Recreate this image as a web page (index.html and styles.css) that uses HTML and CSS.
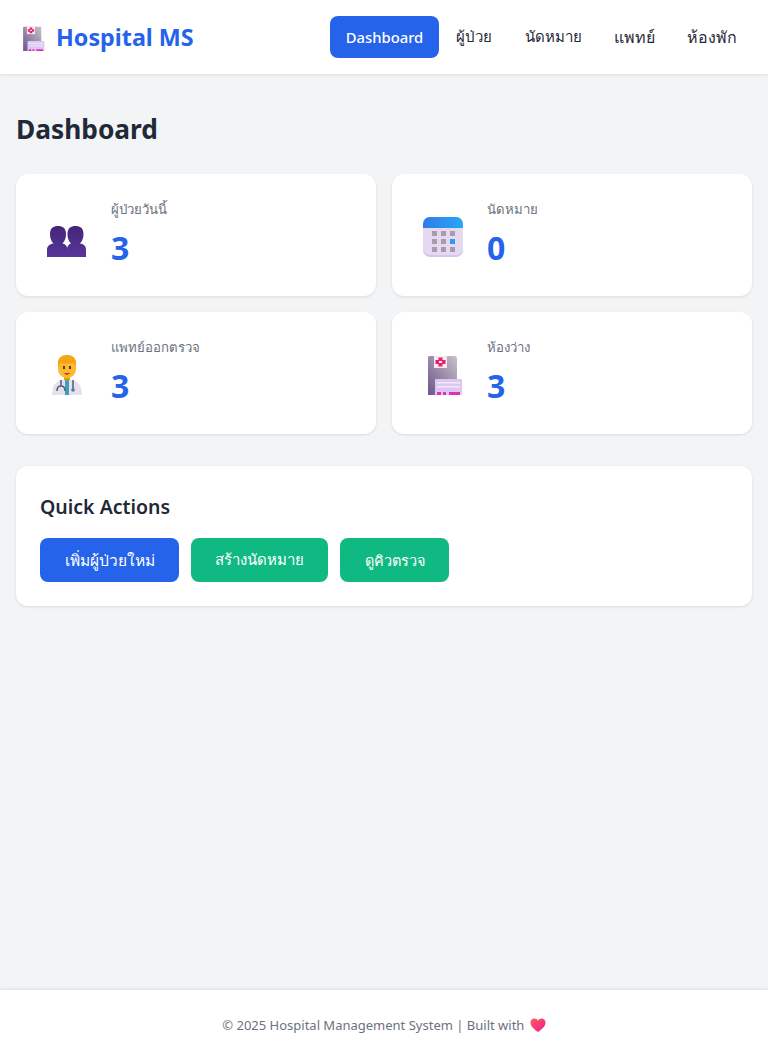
FILE: index.html
```html
<!DOCTYPE html>
<html lang="en">
<head>
<meta charset="utf-8">
<title>Hospital MS</title>
<link rel="stylesheet" href="styles.css">
</head>
<body>
<svg class="defs" width="0" height="0" aria-hidden="true">
  <defs>
    <linearGradient id="bldr" x1="1" y1="0" x2="0" y2="1"><stop offset="0" stop-color="#c6c2c8"/><stop offset="1" stop-color="#6d548c"/></linearGradient>
    <linearGradient id="calTop" x1="0" y1="0" x2="1" y2="0"><stop offset="0" stop-color="#2f7bea"/><stop offset="1" stop-color="#2aa6f5"/></linearGradient>
    <linearGradient id="ppl" x1="0" y1="0" x2="0" y2="1"><stop offset="0" stop-color="#43267a"/><stop offset="1" stop-color="#58369a"/></linearGradient>
    <linearGradient id="hrt" x1="0" y1="0" x2="1" y2="1"><stop offset="0" stop-color="#ff5a5f"/><stop offset="1" stop-color="#f01f8c"/></linearGradient>
    <symbol id="hospital" viewBox="0 0 40 40">
      <path d="M5 2.500A1.500 1.500 0 0 1 6.500 1H32a2 2 0 0 1 2 2V40H5Z" fill="url(#bldr)"/>
      <rect x="11" y="1" width="13" height="12" fill="#f3e9f0"/>
      <path d="M15.500 2.500h4v2.500h3v4h-3v2.500h-4v-2.500h-3v-4h3Z" fill="#ea1f6d"/>
      <rect x="16" y="6" width="3" height="2" fill="#f6e9ef"/>
      <rect x="12" y="24" width="27" height="16" rx="1" fill="#dcc6f2"/>
      <rect x="14" y="27" width="23" height="1.500" fill="#f3e9fb"/>
      <rect x="14" y="31" width="23" height="1.500" fill="#f3e9fb"/>
      <path d="M14 37h4v3h-4ZM20 37h3v3h-3ZM26 37h11v3H26Z" fill="#e22fb2"/>
    </symbol>
  </defs>
</svg>

<header class="topbar">
  <a class="brand" href="#">
    <svg class="brand-icon"><use href="#hospital"/></svg>
    <span>Hospital MS</span>
  </a>
  <nav class="nav">
    <a class="nav-link nav-home active" href="#">Dashboard</a>
    <a class="nav-link nav-patients" href="#">ผู้ป่วย</a>
    <a class="nav-link nav-appts" href="#">นัดหมาย</a>
    <a class="nav-link nav-doctors" href="#">แพทย์</a>
    <a class="nav-link nav-rooms" href="#">ห้องพัก</a>
  </nav>
</header>

<main class="main">
  <h1 class="title">Dashboard</h1>
  <section class="stats">
    <article class="card stat">
      <svg class="stat-icon" viewBox="0 0 40 40">
        <g fill="url(#ppl)">
          <path d="M3 17c0-6 3.500-8 8-8s8 2 8 8c0 5-2 8-3.500 9.500 3.500.8 5 3 5 6.500v7H0v-7c0-3.500 2-5.700 6.500-6.500C5 25 3 22 3 17Z"/>
          <path d="M20.500 17c0-6 3.500-8 8-8s8 2 8 8c0 5-2 8-3.500 9.500 4.500.8 6 3 6 6.500v7H20v-7c0-3.500 1.500-5.700 4-6.500-1.500-1.500-3.500-4.500-3.500-9.500Z"/>
        </g>
      </svg>
      <div class="stat-body"><p class="stat-label">ผู้ป่วยวันนี้</p><p class="stat-value">3</p></div>
    </article>
    <article class="card stat">
      <svg class="stat-icon" viewBox="0 0 40 40">
        <rect x="0" y="0" width="40" height="40" rx="7" fill="#d9c3ee"/>
        <rect x="0" y="0" width="40" height="38" rx="7" fill="#e5d9ef"/>
        <path d="M0 11V7a7 7 0 0 1 7-7h26a7 7 0 0 1 7 7v4Z" fill="url(#calTop)"/>
        <g fill="#a99bae">
          <rect x="9" y="14" width="5" height="5"/><rect x="18" y="14" width="5" height="5"/><rect x="27" y="14" width="5" height="5"/>
          <rect x="9" y="22" width="5" height="5"/><rect x="18" y="22" width="5" height="5"/>
          <rect x="9" y="30" width="5" height="5"/><rect x="18" y="30" width="5" height="5"/><rect x="27" y="30" width="5" height="5"/>
        </g>
        <rect x="27" y="22" width="5" height="5" fill="#2b9df0"/>
      </svg>
      <div class="stat-body"><p class="stat-label">นัดหมาย</p><p class="stat-value">0</p></div>
    </article>
    <article class="card stat">
      <svg class="stat-icon" viewBox="0 0 40 40">
        <path d="M5 40l1-7c1-4 4-7 9-8h10c5 1 8 4 9 8l1 7Z" fill="#e6e0ec"/>
        <path d="M18 24h4v16h-4Z" fill="#3f9fb8"/>
        <path d="M14 25v6m-4 5c0-3 1.500-5 4-5s4 2 4 5M26 25v9" fill="none" stroke="#4b5f78" stroke-width="1.500"/>
        <circle cx="26" cy="35" r="1.800" fill="#4b7fa8"/>
        <rect x="17" y="19" width="6" height="6" fill="#e8a000"/>
        <path d="M11 8c0-5 4-8 9-8s9 3 9 8v6c0 5-4 9-9 9s-9-4-9-9Z" fill="#ffb92e"/>
        <path d="M11 12V8c0-5 4-8 9-8s9 3 9 8v4c-1-3-2-4-3-4-4 1-8 1-12 0-1 0-2 1-3 4Z" fill="#f5a416"/>
        <rect x="16" y="11" width="2" height="3" fill="#5a3a1c"/><rect x="22" y="11" width="2" height="3" fill="#5a3a1c"/>
        <path d="M16.500 18h7l-3.500 2Z" fill="#c42f3a"/>
      </svg>
      <div class="stat-body"><p class="stat-label">แพทย์ออกตรวจ</p><p class="stat-value">3</p></div>
    </article>
    <article class="card stat">
      <svg class="stat-icon"><use href="#hospital"/></svg>
      <div class="stat-body"><p class="stat-label">ห้องว่าง</p><p class="stat-value">3</p></div>
    </article>
  </section>

  <section class="card actions">
    <h2 class="actions-title">Quick Actions</h2>
    <div class="actions-row">
      <a class="btn btn-primary btn-add" href="#">เพิ่มผู้ป่วยใหม่</a>
      <a class="btn btn-green btn-appt" href="#">สร้างนัดหมาย</a>
      <a class="btn btn-green btn-queue" href="#">ดูคิวตรวจ</a>
    </div>
  </section>
</main>

<footer class="footer">
  <p>© 2025 Hospital Management System | Built with <svg class="heart" viewBox="0 0 16 16"><path d="M8 15C3 11.500 .5 8.800.5 5.500.5 3 2.400 1.500 4.400 1.500c1.500 0 2.800.8 3.600 2.200.8-1.400 2.100-2.200 3.600-2.200 2 0 3.900 1.500 3.900 4 0 3.300-2.500 6-7.500 9.500Z" fill="url(#hrt)"/></svg></p>
</footer>
</body>
</html>
```

FILE: styles.css
```css
* { box-sizing: border-box; }
html, body { margin: 0; padding: 0; }
body {
  min-height: 1060px;
  display: flex;
  flex-direction: column;
  background: #f3f4f6;
  color: #1f2937;
  font-family: "Noto Sans", sans-serif;
  font-size: 16px;
}
a { text-decoration: none; color: inherit; }
p, h1, h2 { margin: 0; }
.defs { position: absolute; }

.topbar {
  height: 74px;
  padding: 0 16px 0 20px;
  display: flex;
  align-items: center;
  justify-content: space-between;
  background: #fff;
  box-shadow: 0 1px 3px rgba(0, 0, 0, .1);
}
.brand { display: flex; align-items: center; gap: 11px; color: #2563eb; font-size: 23.300px; font-weight: 700; }
.brand-icon { width: 25px; height: 25px; margin-top: 2px; }
.nav { display: flex; }
.nav-link { height: 42px; display: flex; align-items: center; justify-content: center; border-radius: 8px; font-size: 16px; font-weight: 500; color: #1f2937; }
.nav-link.active { background: #2563eb; color: #fff; font-weight: 500; font-size: 14.800px; }
.nav-home { width: 109px; }
.nav-patients { width: 70px; font-size: 15px; }
.nav-appts { width: 88px; font-size: 15px; }
.nav-doctors { width: 75px; }
.nav-rooms { width: 80px; }

.main { flex: 1; padding: 32px 16px; }
.title { font-size: 26.300px; font-weight: 700; line-height: 46px; margin-bottom: 22px; color: #1f2937; }
.stats { display: grid; grid-template-columns: 1fr 1fr; gap: 16px; margin-bottom: 32px; }
.card { background: #fff; border-radius: 12px; box-shadow: 0 1px 3px rgba(0, 0, 0, .1); }
.stat { height: 122px; padding: 24px; display: flex; align-items: center; }
.stat-icon { width: 40px; height: 40px; margin: 4px 24px 0 7px; flex: none; }
.stat-body { align-self: flex-start; }
.stat-label { font-size: 13.200px; line-height: 22px; color: #6b7280; }
.stat-value { font-size: 32px; font-weight: 700; line-height: 38px; margin-top: 9px; color: #2563eb; }

.actions { padding: 24px; height: 140px; }
.actions-title { font-size: 19.500px; font-weight: 600; line-height: 34px; margin-bottom: 14px; color: #1f2937; }
.actions-row { display: flex; gap: 12px; }
.btn { height: 44px; display: flex; align-items: center; justify-content: center; border-radius: 8px; font-size: 15px; font-weight: 500; color: #fff; }
.btn-primary { background: #2563eb; }
.btn-green { background: #10b981; }
.btn-add { width: 139px; font-size: 15.500px; }
.btn-appt { width: 137px; }
.btn-queue { width: 109px; font-size: 14.500px; }

.footer { height: 70px; background: #fff; box-shadow: 0 -1px 3px rgba(0, 0, 0, .1); display: flex; align-items: center; justify-content: center; font-size: 13px; color: #6b7280; }
.heart { width: 16px; height: 16px; vertical-align: -3px; margin-left: 2px; }
```
